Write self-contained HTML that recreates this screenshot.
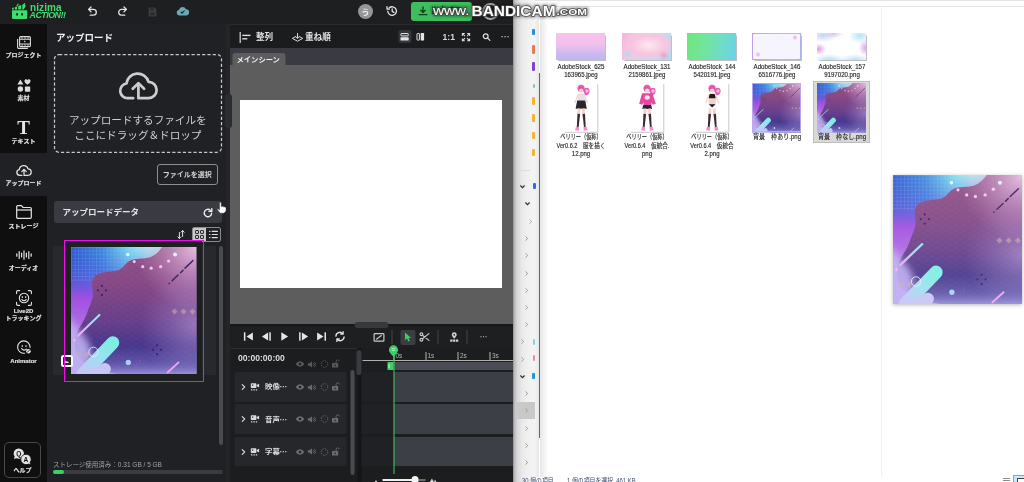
<!DOCTYPE html>
<html lang="ja">
<head>
<meta charset="utf-8">
<title>nizima ACTION!!</title>
<style>
*{box-sizing:border-box;margin:0;padding:0}
html,body{width:1024px;height:482px;overflow:hidden;background:#fff}
body{position:relative;font-family:"Liberation Sans","Noto Sans CJK JP",sans-serif;color:#ddd}
.abs,.abs *{position:absolute}
.abs{position:absolute}
svg{display:block;overflow:visible}
/* ---------- app ---------- */
#app{left:0;top:0;width:513px;height:482px;background:#1c1d1f;overflow:hidden}
#hdr{left:0;top:0;width:513px;height:24px;background:#1e1f21}
#side{left:0;top:24px;width:47px;height:458px;background:#0f0f10}
#panel{left:47px;top:24px;width:179px;height:458px;background:#202124}
#gut{z-index:3;left:226px;top:24px;width:3.500px;height:458px;background:#242528}
#tool{left:229.500px;top:25px;width:283.500px;height:23px;background:#1b1c1e}
#tabs{left:229.500px;top:48px;width:283.500px;height:17px;background:#3a3a43}
#stage{left:229.500px;top:65px;width:283.500px;height:259px;background:#5d5d5d}
#canvas{left:240px;top:100px;width:262px;height:188px;background:#fff}
#tl{left:229.500px;top:324px;width:283.500px;height:158px;background:#1c1d1f}
.sl{margin-top:-.8px;-webkit-text-stroke:.15px #e4e4e4;font-weight:bold;font-size:6px;line-height:8px;color:#e4e4e4;text-align:center;width:47px;left:0;white-space:nowrap}
.t{white-space:nowrap;line-height:1}
/* ---------- explorer ---------- */
#exp{left:513px;top:0;width:511px;height:482px;background:#fff;overflow:hidden}
.fl{-webkit-text-stroke:.15px #262626;font-size:7px;line-height:8px;color:#262626;text-align:center;width:80px;white-space:nowrap;font-family:"Liberation Sans","Noto Sans CJK JP",sans-serif}
#tool>*,#tabs>*,#tl>*{transform:translateX(.5px)}
#wrap{position:absolute;left:-20px;top:-20px;width:1064px;height:522px;padding:0;background:linear-gradient(90deg,#141516 0,#141516 533px,#fff 533px);filter:blur(.45px)}
#wrap>*{transform:translate(20px,20px)}
</style>
</head>
<body>
<svg width="0" height="0" style="position:absolute"><defs>
<linearGradient id="g-base" x1="0" y1="0" x2="1" y2="0"><stop offset="0" stop-color="#2f57d2"/><stop offset=".25" stop-color="#3c8ae0"/><stop offset=".46" stop-color="#7ddcf0"/><stop offset=".62" stop-color="#b4f2f6"/><stop offset="1" stop-color="#b4f2f6"/></linearGradient>
<linearGradient id="g-left" x1="0" y1="0" x2="0" y2="1"><stop offset="0" stop-color="#3a5fd6" stop-opacity="0"/><stop offset=".22" stop-color="#5a58d8" stop-opacity=".6"/><stop offset=".4" stop-color="#a04fe0"/><stop offset=".62" stop-color="#b070e6"/><stop offset=".82" stop-color="#aea2ee"/><stop offset="1" stop-color="#b9b0f2"/></linearGradient>
<linearGradient id="g-blob" x1="0" y1="0" x2="0" y2="1"><stop offset="0" stop-color="#935384"/><stop offset=".35" stop-color="#824685"/><stop offset=".58" stop-color="#673f8b"/><stop offset=".78" stop-color="#46368c"/><stop offset="1" stop-color="#4a3f9a"/></linearGradient>
<linearGradient id="g-fade" x1="0" y1="0" x2="0" y2="1"><stop offset="0" stop-color="#b4acf0" stop-opacity="0"/><stop offset=".5" stop-color="#a99fe8" stop-opacity=".25"/><stop offset=".8" stop-color="#b4acf0" stop-opacity=".85"/><stop offset="1" stop-color="#c4bcf6" stop-opacity="1"/></linearGradient>
<radialGradient id="g-hl" cx="1" cy="0" r=".5"><stop offset="0" stop-color="#e9c3e6" stop-opacity=".95"/><stop offset="1" stop-color="#c98fc4" stop-opacity="0"/></radialGradient>
<radialGradient id="g-hr" cx="1" cy=".62" r=".45"><stop offset="0" stop-color="#cbb0e8" stop-opacity=".5"/><stop offset="1" stop-color="#b090d8" stop-opacity="0"/></radialGradient>
<linearGradient id="g-bar" x1="1" y1="0" x2="0" y2="1"><stop offset="0" stop-color="#7eeee4"/><stop offset=".5" stop-color="#9fe0f0"/><stop offset="1" stop-color="#c9c4f6"/></linearGradient>
<linearGradient id="g-pl" x1="0" y1="1" x2="1" y2="0"><stop offset="0" stop-color="#f5a6ee"/><stop offset="1" stop-color="#8fe8f0"/></linearGradient>
<pattern id="p-grid" width="3.600" height="3.600" patternUnits="userSpaceOnUse"><path d="M3.600 0H0V3.600" fill="none" stroke="#a8d8ff" stroke-opacity=".6" stroke-width=".45"/></pattern>
<pattern id="p-dash" width="9" height="5.600" patternUnits="userSpaceOnUse"><path d="M1 1.400q1.500-.9 3 0" fill="none" stroke="#d8a8e0" stroke-opacity=".13" stroke-width=".5"/><path d="M5.500 4.200q1.500-.9 3 0" fill="none" stroke="#d8a8e0" stroke-opacity=".13" stroke-width=".5"/></pattern>
<filter id="f-b3" x="-20%" y="-20%" width="140%" height="140%"><feGaussianBlur stdDeviation="3.500"/></filter>
<filter id="f-b1" x="-20%" y="-20%" width="140%" height="140%"><feGaussianBlur stdDeviation="1.200"/></filter>
<filter id="f-wm" x="-10%" y="-50%" width="120%" height="200%"><feGaussianBlur stdDeviation=".9"/></filter>
<clipPath id="c-img"><rect width="126" height="126"/></clipPath>
<symbol id="bgimg" viewBox="0 0 126 126" preserveAspectRatio="none">
 <g clip-path="url(#c-img)">
  <rect width="126" height="126" fill="url(#g-base)"/>
  <rect width="126" height="126" fill="url(#g-left)"/>
  <rect width="70" height="34" fill="url(#p-grid)"/>
  <!-- blob -->
  <path id="blobp" d="M93 -2C88 5 84 9.500 76 11 69 12.300 62 11 57 15 53 18.500 52 21.500 47 23 40 25 31 24 25 28 20 32 21 38 22 45 22.500 52 19 57 17 63 15 69 13 73 9 79 4 86 2 96 6 106 10 118 40 128 70 128H128V-2z" fill="url(#g-blob)"/>
  <path d="M93 -2C88 5 84 9.500 76 11 69 12.300 62 11 57 15 53 18.500 52 21.500 47 23 40 25 31 24 25 28 20 32 21 38 22 45 22.500 52 19 57 17 63 15 69 13 73 9 79 4 86 2 96 6 106 10 118 40 128 70 128H128V-2z" fill="url(#p-dash)"/>
  <rect width="126" height="126" fill="url(#g-hl)"/>
  <rect width="126" height="126" fill="url(#g-hr)"/>
  <!-- bottom haze -->
  <rect x="-10" y="98" width="150" height="38" fill="url(#g-fade)" filter="url(#f-b3)"/>
  <path d="M-6 66C2 76 10 84 16 92 24 104 20 120 10 132H-6z" fill="#bfaef2" opacity=".9" filter="url(#f-b3)"/>
  <!-- dots -->
  <g fill="#f3c4f0"><circle cx="63.500" cy="14.500" r="1.500"/><circle cx="72" cy="19.500" r="1.600"/><circle cx="80.500" cy="21" r="1.600"/><circle cx="90" cy="19.500" r="1.600"/><circle cx="98" cy="14" r="1.700"/></g>
  <circle cx="57" cy="7.500" r="1.700" fill="#eafcff"/><circle cx="104.500" cy="7.500" r="2" fill="#d9f3fb"/>
  <!-- dark dashed line -->
  <g stroke="#3d2468" stroke-width="1.500" stroke-linecap="round"><path d="M98.500 36.300l.2-.2M101.500 33.500l6-5.700M110 25.500l2.500-2.400M114.500 21l8-7.600"/></g>
  <!-- dark diamond dots -->
  <g fill="#3f1f66"><circle cx="31" cy="38.500" r="1.100"/><circle cx="27" cy="43" r="1.100"/><circle cx="35" cy="43" r="1.100"/><circle cx="31" cy="47.500" r="1.100"/>
   <circle cx="86.500" cy="97.500" r="1.100"/><circle cx="82.500" cy="102" r="1.100"/><circle cx="90.500" cy="102" r="1.100"/><circle cx="86.500" cy="106.500" r="1.100"/></g>
  <!-- tan diamonds -->
  <g fill="#cdb0a8" opacity=".55"><path d="M104 61l3 3-3 3-3-3zM113 61l3 3-3 3-3-3zM122 61l3 3-3 3-3-3zM8 104l3 3-3 3-3-3zM16 104l3 3-3 3-3-3z"/></g>
  <!-- pink/cyan diagonal line -->
  <path d="M7 88 28.500 67.500" stroke="url(#g-pl)" stroke-width="2.200" stroke-linecap="round"/>
  <circle cx="3.500" cy="92.500" r="1.300" fill="#f3b6f0"/>
  <!-- big cyan bars -->
  <path d="M12 126 42 95" stroke="url(#g-bar)" stroke-width="13" stroke-linecap="round"/>
  <path d="M18 130 34 121" stroke="#c6c6f6" stroke-width="12" stroke-linecap="round"/>
  <circle cx="22.500" cy="104" r="4.600" fill="none" stroke="#f4f0ff" stroke-width=".8"/>
  <!-- cyan dot, pink line -->
  <circle cx="57.500" cy="114.500" r="2.600" fill="#8fdcf0"/><circle cx="58.300" cy="115.200" r="1.300" fill="#e9b0f0"/>
  <path d="M97 124.500 108 114.500" stroke="#f0a8ee" stroke-width="1.800" stroke-linecap="round"/>
  <circle cx="66" cy="116" r=".8" fill="#7a60b0"/><circle cx="69" cy="113" r=".8" fill="#7a60b0"/>
 </g>
</symbol>
</defs></svg>
<div id="wrap">
<div id="app" class="abs">
  <div id="hdr">
    <!-- logo -->
    <svg style="left:11px;top:3px" width="17" height="17" viewBox="0 0 17 17"><g fill="#3fdc6e">
      <path d="M1 7.2h15.2v7.6a1.2 1.2 0 0 1-1.2 1.2H2.2A1.2 1.2 0 0 1 1 14.8z"/>
      <path d="M1 6.6V5.1l1.8-.6v2.1zM3.8 6.6V4.2l2.3-.8v3.2zM7.2 6.6V3l3-1v4.6zM11.3 6.6V1.7L13.8.9l.9 2.4-2 3.3z"/>
      <path d="M5.2 3.2 6.9.6l.9.5-1.3 2.2zM11.6 2.2 13.6 0l.8.7-1.7 2z"/>
      </g>
      <rect x="5.2" y="10" width="1.8" height="2.6" rx=".4" fill="#1e1f21"/><rect x="10.2" y="10" width="1.8" height="2.6" rx=".4" fill="#1e1f21"/>
    </svg>
    <div class="t" style="left:30px;top:2.6px;font-size:10px;font-weight:bold;color:#3fdc6e;letter-spacing:.1px">nizima</div>
    <div class="t" style="left:29.5px;top:11.2px;font-size:8.9px;font-weight:bold;font-style:italic;color:#3fdc6e;letter-spacing:-.5px">ACTION!!</div>
    <!-- undo / redo -->
    <svg style="left:87px;top:6px" width="11" height="11" viewBox="0 0 11 11" fill="none" stroke="#e2e2e2" stroke-width="1.3" stroke-linecap="round" stroke-linejoin="round"><path d="M4 1 1.6 3.4 4 5.8"/><path d="M1.8 3.4h4.6a2.9 2.9 0 0 1 0 5.8H3.2"/></svg>
    <svg style="left:117px;top:6px" width="11" height="11" viewBox="0 0 11 11" fill="none" stroke="#e2e2e2" stroke-width="1.3" stroke-linecap="round" stroke-linejoin="round"><path d="M7 1l2.4 2.4L7 5.8"/><path d="M9.2 3.4H4.6a2.9 2.9 0 0 0 0 5.8h3.2"/></svg>
    <!-- save (disabled) -->
    <svg style="left:148px;top:7px" width="9" height="10" viewBox="0 0 9 10"><path d="M.6 1.2A.8.8 0 0 1 1.4.4h5l2 2v6.4a.8.8 0 0 1-.8.8H1.400a.8.800 0 0 1-.8-.8z" fill="#3d3e42"/><rect x="2" y="1.200" width="4" height="2.200" fill="#2b2c2f"/><rect x="2.200" y="5.400" width="4.600" height="3" fill="#2b2c2f"/></svg>
    <!-- cloud -->
    <svg style="left:176px;top:6px" width="13" height="10" viewBox="0 0 13 10"><path d="M3.300 9.600A3 3 0 0 1 3 3.700 3.700 3.700 0 0 1 10 3.300a3.100 3.100 0 0 1-.2 6.300z" fill="#6aa9b8"/><path d="M4.700 5.800l1.400 1.400 2.500-2.700" fill="none" stroke="#1e1f21" stroke-width="1.100"/></svg>
    <!-- avatar -->
    <div style="left:358px;top:4px;width:15px;height:15px;border-radius:50%;background:#969696"></div>
    <div class="t" style="left:358px;top:7.500px;width:15px;text-align:center;font-size:8.500px;font-weight:bold;color:#f4f4f4">う</div>
    <!-- history -->
    <svg style="left:386px;top:5px" width="12" height="12" viewBox="0 0 12 12" fill="none" stroke="#e2e2e2" stroke-width="1.300" stroke-linecap="round" stroke-linejoin="round"><path d="M1.800 6.200a4.300 4.300 0 1 0 1.300-3.200"/><path d="M1 1.700v2.400h2.400" /><path d="M6.200 3.800v2.600l1.700 1"/></svg>
    <div style="left:482.300px;top:3.200px;width:17px;height:17px;border-radius:50%;border:2px solid #b4b4b4"></div>
    <!-- export button -->
    <div style="left:411px;top:2px;width:61px;height:19px;border-radius:3px;background:#3dbd5d"></div>
    <svg style="left:418px;top:6px" width="10" height="10" viewBox="0 0 10 10" fill="none" stroke="#14401f" stroke-width="1.400" stroke-linecap="round" stroke-linejoin="round"><path d="M5 1v5M2.800 4.200 5 6.400l2.200-2.200M1 8.600h8"/></svg>
    <div class="t" style="left:431px;top:7px;font-size:8px;font-weight:bold;color:#14401f">出力する</div>
  </div>
  <div id="side">
    <!-- active bg -->
    <div style="left:0;top:129px;width:47px;height:43px;background:#202124"></div>
    <!-- project (top offsets are relative to side: y-24) -->
    <svg style="left:17px;top:12px" width="14" height="13" viewBox="0 0 14 13" fill="none" stroke="#dcdcdc" stroke-width="1.100"><rect x="2.600" y=".6" width="10.800" height="10" rx="1.200"/><path d="M.6 3v8.200a1.200 1.200 0 0 0 1.200 1.200h9" /><path d="M2.600 3.200h10.800M2.600 8h10.800" /><path d="M5 .8v2.200M8 .8v2.200M11 .8v2.200M5 8.200v2.200M8 8.200v2.200M11 8.200v2.200" stroke-width=".8"/><path d="M7.200 4.600v2l1.700-1z" fill="#dcdcdc" stroke="none"/></svg>
    <div class="sl" style="top:28px">プロジェクト</div>
    <!-- material -->
    <svg style="left:17px;top:55px" width="14" height="13" viewBox="0 0 14 13" fill="#dcdcdc"><path d="M3.400.6 6.400 5.600H.4z"/><path d="M10.500 5.800C8.600 4.400 7.500 3.400 7.500 2.200A1.500 1.500 0 0 1 10.500 1.500 1.500 1.500 0 0 1 13.500 2.200C13.500 3.400 12.400 4.400 10.500 5.800z"/><circle cx="3.400" cy="10" r="2.700"/><rect x="7.900" y="7.400" width="5.300" height="5.300" rx=".6"/></svg>
    <div class="sl" style="top:70.500px">素材</div>
    <!-- text -->
    <div class="t" style="left:0;top:94px;width:47px;text-align:center;font-family:'Liberation Serif',serif;font-weight:bold;font-size:19px;color:#e4e4e4">T</div>
    <div class="sl" style="top:113.500px">テキスト</div>
    <!-- upload -->
    <svg style="left:15.800px;top:141px" width="16.500" height="11" viewBox="0 0 42 28" fill="none" stroke="#e4e4e4" stroke-width="3.300" stroke-linecap="round" stroke-linejoin="round"><path d="M15.200 26.200H9.600A7.400 7.400 0 0 1 8.400 11.500 11.300 11.300 0 0 1 30.500 9.800 8.200 8.200 0 0 1 30.400 26.200H20.400V11.800"/><path d="M14.700 16.800 20.400 11.100l5.700 5.700"/></svg>
    <div class="sl" style="top:155.500px">アップロード</div>
    <!-- storage -->
    <svg style="left:16px;top:181px" width="16" height="14" viewBox="0 0 16 14" fill="none" stroke="#e4e4e4" stroke-width="1.200" stroke-linejoin="round"><path d="M.7 1.800A1.100 1.100 0 0 1 1.800.7h3.700l1.600 1.800h7.100a1.100 1.100 0 0 1 1.100 1.100v8.600a1.100 1.100 0 0 1-1.100 1.100H1.800A1.100 1.100 0 0 1 .7 12.200z"/><path d="M.7 5h14.600"/></svg>
    <div class="sl" style="top:198.500px">ストレージ</div>
    <!-- audio -->
    <svg style="left:16px;top:226px" width="16" height="10" viewBox="0 0 16 10" fill="none" stroke="#e4e4e4" stroke-width="1.200" stroke-linecap="round"><path d="M.8 3.800v2.400M3.200 1.600v6.800M5.600 3v4M8 .8v8.400M10.400 3v4M12.800 1.600v6.800M15.200 3.800v2.400"/></svg>
    <div class="sl" style="top:240.500px">オーディオ</div>
    <!-- live2d tracking -->
    <svg style="left:16px;top:266px" width="16" height="16" viewBox="0 0 16 16" fill="none" stroke="#e4e4e4" stroke-width="1.100" stroke-linecap="round"><path d="M.6 3.600V1.700A1.100 1.100 0 0 1 1.700.6h1.900M12.400.6h1.900a1.100 1.100 0 0 1 1.100 1.100v1.900M15.400 12.400v1.900a1.100 1.100 0 0 1-1.100 1.100h-1.900M3.600 15.400H1.700A1.100 1.100 0 0 1 .6 14.300v-1.900"/><circle cx="8" cy="8" r="4.700"/><path d="M6.300 6.600v.9M9.700 6.600v.9M5.900 9.400a2.400 2.400 0 0 0 4.200 0" /></svg>
    <div class="sl" style="top:284px">Live2D</div>
    <div class="sl" style="top:291px">トラッキング</div>
    <!-- animator -->
    <svg style="left:17px;top:316px" width="15" height="15" viewBox="0 0 15 15" fill="none" stroke="#e4e4e4" stroke-width="1.100" stroke-linecap="round"><path d="M13 7.400A6.200 6.200 0 1 0 7.600 13.200"/><path d="M5.200 5.600v1M9 5.600v1M4.600 8.600a3 3 0 0 0 4.800.6"/><circle cx="11.400" cy="11.200" r="2.300" fill="#e4e4e4" stroke="none"/><path d="M10.300 12.300l2.200-2.200" stroke="#0f0f10" stroke-width=".9"/></svg>
    <div class="sl" style="top:333.500px">Animator</div>
    <!-- help -->
    <div style="left:4px;top:418px;width:37px;height:36px;border:1px solid #47484c;border-radius:5px"></div>
    <svg style="left:13px;top:424px" width="19" height="17" viewBox="0 0 19 17"><path d="M5.800.4a5.200 5.200 0 0 1 0 10.400c-.9 0-1.700-.2-2.400-.5L.8 11l.9-2.200A5.200 5.200 0 0 1 5.800.4z" fill="#e4e4e4"/><path d="M13 6.200a5.200 5.200 0 0 0 0 10.400c.9 0 1.700-.2 2.400-.5l2.600.7-.9-2.200A5.200 5.200 0 0 0 13 6.200z" fill="#e4e4e4" stroke="#0f0f10" stroke-width=".8"/></svg>
    <div class="t" style="left:16.200px;top:427px;font-size:6.500px;font-weight:bold;color:#111">Q</div>
    <div class="t" style="left:23.600px;top:432.800px;font-size:6.500px;font-weight:bold;color:#111">A</div>
    <div class="sl" style="top:442.500px;left:-1px">ヘルプ</div>
  </div>
  <div id="panel">
    <!-- coordinates relative to panel: x-47, y-24 -->
    <div class="t" style="left:9px;top:8.500px;font-size:9.500px;font-weight:bold;color:#f0f0f0">アップロード</div>
    <svg style="left:6.800px;top:30.400px" width="170" height="100" viewBox="0 0 170 100" fill="none"><rect x=".5" y=".5" width="167" height="97.800" rx="4.500" stroke="#c8c8c8" stroke-width="1.250" stroke-dasharray="3.200 2.100"/></svg>
    <svg style="left:71px;top:47.500px" width="42" height="28" viewBox="0 0 42 28" fill="none" stroke="#cdcdcd" stroke-width="2.700" stroke-linecap="round" stroke-linejoin="round"><path d="M15.200 26.200H9.600A7.400 7.400 0 0 1 8.400 11.500 11.300 11.300 0 0 1 30.500 9.800 8.200 8.200 0 0 1 30.400 26.200H20.400V11.800"/><path d="M14.700 16.800 20.400 11.100l5.700 5.700"/></svg>
    <div class="t" style="left:1.300px;top:90.500px;width:179px;text-align:center;font-size:10.600px;color:#cfcfcf">アップロードするファイルを</div>
    <div class="t" style="left:1.400px;top:106px;width:179px;text-align:center;font-size:10.600px;color:#cfcfcf">ここにドラッグ＆ドロップ</div>
    <!-- select button -->
    <div style="left:110px;top:140px;width:60.500px;height:20.500px;border:1px solid #8e8e90;border-radius:3px"></div>
    <div class="t" style="left:110px;top:146.500px;width:60.500px;text-align:center;font-size:7px;font-weight:bold;color:#d8d8d8">ファイルを選択</div>
    <!-- section header -->
    <div style="left:6.500px;top:177px;width:168.500px;height:22px;border-radius:3px;background:#3a3a43"></div>
    <div class="t" style="left:15.500px;top:184px;font-size:8.500px;font-weight:bold;color:#e6e6e6">アップロードデータ</div>
    <svg style="left:156px;top:183.500px" width="10" height="10" viewBox="0 0 10 10" fill="none" stroke="#f0f0f0" stroke-width="1.400" stroke-linecap="round" stroke-linejoin="round"><path d="M8.600 5.200A3.700 3.700 0 1 1 7.300 2.200"/><path d="M8.800.6v2.800H6" /></svg>
    <!-- sort / view toggle -->
    <svg style="left:129.500px;top:206px" width="8" height="9" viewBox="0 0 8 9" fill="none" stroke="#e0e0e0" stroke-width="1" stroke-linecap="round" stroke-linejoin="round"><path d="M2.400 8.400V2.600M.8 6.800l1.600 1.600L4 6.800M5.600.6v5.800M4 2.200 5.600.6l1.600 1.600"/></svg>
    <div style="left:144.500px;top:203px;width:29px;height:14.500px;border:1px solid #8a8a8c;border-radius:2px"></div>
    <div style="left:145.500px;top:204px;width:13.500px;height:12.500px;background:#c9c9c9;border-radius:1px 0 0 1px"></div>
    <svg style="left:148px;top:206px" width="9" height="9" viewBox="0 0 9 9" fill="none" stroke="#2a2a2d" stroke-width="1"><rect x=".5" y=".5" width="3" height="3" rx=".5"/><rect x="5.500" y=".5" width="3" height="3" rx=".5"/><rect x=".5" y="5.500" width="3" height="3" rx=".5"/><rect x="5.500" y="5.500" width="3" height="3" rx=".5"/></svg>
    <svg style="left:162px;top:206px" width="9" height="9" viewBox="0 0 9 9" fill="none" stroke="#e0e0e0" stroke-width="1.100" stroke-linecap="round"><path d="M.6 1.400h.4M.6 4.500h.4M.6 7.600h.4M3.200 1.400h5.200M3.200 4.500h5.200M3.200 7.600h5.200"/></svg>
    <!-- list row bg + thumbnail -->
    <div style="left:6px;top:222px;width:163px;height:128.500px;background:#28292c"></div>
    <div style="left:18px;top:217px;width:137px;height:139.500px;background:#1e1f21"></div>
    <svg style="left:23.500px;top:222.500px" width="125.500" height="127" viewBox="0 0 126 126" preserveAspectRatio="none"><use href="#bgimg"/></svg>
    <!-- type badge -->
    <div style="left:13.500px;top:330.500px;width:12.500px;height:12.500px;border:2.200px solid #f6f6f6;border-radius:2.500px;background:#2a2a2e"></div>
    <svg style="left:17px;top:335px" width="5" height="4" viewBox="0 0 5 4"><path d="M0 4 1.800 1.400 3 3 3.800 2.200 5 4z" fill="#eee"/></svg>
    <!-- magenta frame -->
    <div style="left:16.500px;top:215.500px;width:140px;height:142px;border:1.500px solid #f20af0"></div>
    <!-- scrollbar -->
    <div style="left:171.500px;top:222px;width:4px;height:199px;border-radius:2px;background:#4b4b52"></div>
    <!-- storage -->
    <div class="t" style="left:6px;top:437.500px;font-size:6.500px;color:#a2a2a4">ストレージ使用済み：0.31 GB / 5 GB</div>
    <div style="left:6px;top:446px;width:170px;height:4px;border-radius:2px;background:#3b3c42"></div>
    <div style="left:6px;top:446px;width:11px;height:4px;border-radius:2px;background:#3ccf63"></div>
    <!-- hand cursor -->
    <svg style="left:170px;top:178.300px;z-index:5" width="9.500" height="12" viewBox="0 0 9.500 12"><path d="M2.500 1.200a.85.85 0 0 1 1.700 0V4.600l.9-.3c.5-.2 1 0 1.200.4.500-.3 1.100-.1 1.400.4.600-.2 1.200.1 1.300.8.200 1.400.100 2.700-.400 3.700-.400.900-1.200 1.500-2.300 1.600H4.600C3.400 11.300 2.500 10.600 1.900 9.700L.4 7.700C0 7.100.6 6.500 1.200 6.900L2.500 8z" fill="#fdfdfd" stroke="#26272a" stroke-width=".4"/></svg>
  </div>
  <div id="gut"><div style="left:-1.500px;top:70px;width:7px;height:34px;border-radius:3px;background:#2b2c30"></div></div>
  <div style="left:230px;top:24px;width:283px;height:1px;background:#2a2b2e"></div>
  <div id="tool">
    <!-- relative: x-230, y-25 -->
    <svg style="left:9.500px;top:7px" width="12" height="11" viewBox="0 0 12 11" fill="none" stroke="#dedede" stroke-linecap="butt"><path d="M.7 0v11" stroke-width="1.200"/><path d="M2.800 3.400h8.200" stroke-width="1.400"/><path d="M2.800 6.800h5" stroke-width="1.400"/></svg>
    <div class="t" style="left:26px;top:7.500px;font-size:8.600px;font-weight:bold;color:#e2e2e2">整列</div>
    <svg style="left:61px;top:7.500px" width="12" height="9" viewBox="0 0 12 9" fill="none" stroke="#dedede" stroke-width="1" stroke-linejoin="round" stroke-linecap="round"><path d="M4.200 3.600.8 5.400 6 8.200l5.200-2.800-3.400-1.800"/><path d="M6 .5v4.700M4.600 3.900 6 5.300l1.400-1.400"/></svg>
    <div class="t" style="left:75px;top:7.500px;font-size:8.600px;font-weight:bold;color:#e2e2e2">重ね順</div>
    <!-- layout toggles -->
    <div style="left:168.500px;top:5px;width:12.500px;height:12.500px;border-radius:2px;background:#34353b"></div>
    <svg style="left:170.800px;top:7.600px" width="8.200" height="7.600" viewBox="0 0 8.200 7.600"><rect x=".5" y=".5" width="7.200" height="2.400" rx=".5" fill="none" stroke="#e4e4e4" stroke-width="1"/><rect x="0" y="4.200" width="8.200" height="3.400" rx=".6" fill="#e4e4e4"/></svg>
    <svg style="left:186.500px;top:7.600px" width="7.600" height="7.600" viewBox="0 0 7.600 7.600"><rect x=".5" y=".5" width="2.400" height="6.600" rx=".5" fill="none" stroke="#e4e4e4" stroke-width="1"/><rect x="4.200" y="0" width="3.400" height="7.600" rx=".6" fill="#e4e4e4"/></svg>
    <div class="t" style="left:212.500px;top:8px;font-size:8.600px;font-weight:bold;color:#d8d8d8">1:1</div>
    <svg style="left:231px;top:7.600px" width="9" height="8.400" viewBox="0 0 9 9" fill="none" stroke="#dedede" stroke-width="1.100"><path d="M.6 3.200V.6H3.200M.8.800 3.400 3.400M5.800.6H8.400V3.200M8.200.8 5.600 3.400M8.400 5.800V8.400H5.800M8.200 8.200 5.600 5.600M3.200 8.400H.6V5.800M.8 8.200 3.400 5.600"/></svg>
    <svg style="left:252.500px;top:8px" width="8" height="8" viewBox="0 0 9 9" fill="none" stroke="#dedede" stroke-width="1.400" stroke-linecap="round"><circle cx="3.600" cy="3.600" r="2.700"/><path d="M5.800 5.800 8.300 8.300"/></svg>
    <div class="t" style="left:271px;top:8px;font-size:8px;font-weight:bold;color:#c8c8c8;letter-spacing:.3px">···</div>
  </div>
  <div id="tabs">
    <div style="left:2px;top:5px;width:53px;height:12px;border-radius:3px 3px 0 0;background:#5d5d5d"></div>
    <div class="t" style="left:6.500px;top:8px;font-size:7.300px;font-weight:bold;color:#f0f0f0">メインシーン</div>
  </div>
  <div id="stage"></div>
  <div id="canvas"></div>
  <div id="tl">
    <!-- relative: x-230, y-324 -->
    <div style="left:0;top:0;width:283px;height:2px;background:#151617"></div>
    <div style="left:0;top:2px;width:283px;height:22px;background:#1e1f21"></div>
    <div style="left:0;top:23.500px;width:127px;height:1px;background:#2d2e32"></div>
    <!-- playback icons (centers 247.8 266.3 284.5 302.8 321 339.5 ; y 336.5) -->
    <svg style="left:13px;top:8px" width="10" height="9" viewBox="0 0 10 9" fill="#e6e6e6"><rect x=".4" y=".3" width="1.500" height="8.400"/><path d="M9.400.4v8.200L3 4.500z"/></svg>
    <svg style="left:31.500px;top:8px" width="10" height="9" viewBox="0 0 10 9" fill="#e6e6e6"><path d="M6.600.4v8.200L.4 4.500z"/><rect x="7.800" y=".3" width="1.500" height="8.400"/></svg>
    <svg style="left:50.500px;top:8px" width="8" height="9" viewBox="0 0 8 9" fill="#e6e6e6"><path d="M.8.200v8.600L7.600 4.500z"/></svg>
    <svg style="left:68px;top:8px" width="10" height="9" viewBox="0 0 10 9" fill="#e6e6e6"><rect x=".6" y=".3" width="1.500" height="8.400"/><path d="M3.400.4v8.200l6.200-4.100z"/></svg>
    <svg style="left:86px;top:8px" width="10" height="9" viewBox="0 0 10 9" fill="#e6e6e6"><path d="M.6.400v8.200L7 4.500z"/><rect x="8" y=".3" width="1.500" height="8.400"/></svg>
    <svg style="left:104px;top:7px" width="11" height="11" viewBox="0 0 11 11" fill="none" stroke="#e6e6e6" stroke-width="1.300" stroke-linecap="round" stroke-linejoin="round"><path d="M1.400 5.200A3.900 3.900 0 0 1 8.200 2.600"/><path d="M8.600.6v2.400H6.200"/><path d="M9.600 5.800A3.900 3.900 0 0 1 2.800 8.400"/><path d="M2.400 10.400V8h2.400"/></svg>
    <!-- horizontal + vertical handles -->
    <div style="left:124px;top:-2.500px;width:34px;height:6px;border-radius:3px;background:#38393d;z-index:2"></div>
    <div style="left:127px;top:24px;width:4.500px;height:134px;background:#141516"></div>
    <div style="left:126.500px;top:26px;width:5px;height:25px;border-radius:2.500px;background:#3a3a40"></div>
    <!-- timeline tools -->
    <svg style="left:143px;top:8.500px" width="11" height="9" viewBox="0 0 11 9" fill="none" stroke="#c8c8c8" stroke-width="1.200" stroke-linejoin="round"><rect x=".6" y=".6" width="9.800" height="7.600" rx=".8"/><path d="M2.600 6.400 8.200 2.200"/></svg>
    <div style="left:161px;top:6px;width:1px;height:14px;background:#44454a"></div>
    <div style="left:170px;top:5.500px;width:15.500px;height:15px;border-radius:2px;background:#3c3d43"></div>
    <svg style="left:174.500px;top:8px" width="7" height="10" viewBox="0 0 7 10"><path d="M.5.400v7.800l2-1.700L4 9.600l1.400-.6L4 5.900h2.600z" fill="#3ccf63"/></svg>
    <svg style="left:189.500px;top:8px" width="10" height="10" viewBox="0 0 10 10" fill="none" stroke="#c8c8c8" stroke-width="1.200" stroke-linecap="round"><circle cx="1.900" cy="2.300" r="1.400"/><circle cx="1.900" cy="7.700" r="1.400"/><path d="M3 3.200 9.400 8.400M3 6.800 9.400 1.600"/></svg>
    <div style="left:207px;top:6px;width:1px;height:14px;background:#44454a"></div>
    <svg style="left:219.500px;top:7.500px" width="9.500" height="10.500" viewBox="0 0 10 12"><path d="M5 .4a2.800 2.800 0 0 1 2.800 2.800C7.800 5.200 5 7.600 5 7.600S2.200 5.200 2.200 3.200A2.800 2.800 0 0 1 5 .4z" fill="#d0d0d0"/><circle cx="5" cy="3.200" r="1" fill="#1e1f21"/><path d="M.4 8.600h2.600v2.600H.4zM3.700 8.600h2.600v2.600H3.700zM7 8.600h2.600v2.600H7z" fill="#d0d0d0"/></svg>
    <div style="left:236px;top:6px;width:1px;height:14px;background:#44454a"></div>
    <div class="t" style="left:250px;top:8.500px;font-size:7px;font-weight:bold;color:#a8a8a8;letter-spacing:.2px">···</div>
    <!-- track rows -->
    <div style="left:4px;top:47.500px;width:112px;height:30px;background:#26272a;border-radius:1px"></div>
    <div style="left:4px;top:80px;width:112px;height:29.500px;background:#26272a;border-radius:1px"></div>
    <div style="left:4px;top:112.500px;width:112px;height:29.500px;background:#26272a;border-radius:1px"></div>
    <!-- timecode + header icons -->
    <div class="t" style="left:8px;top:30px;font-size:8.600px;font-weight:bold;color:#dcdcdc">00:00:00:00</div>
    <svg style="left:65.500px;top:37px" width="9" height="6" viewBox="0 0 9 6"><path d="M.3 3C1.500 1.100 2.900.3 4.500.3S7.500 1.100 8.700 3C7.500 4.900 6.100 5.700 4.500 5.700S1.500 4.900.3 3z" fill="#58595e"/><circle cx="4.500" cy="3" r="1.200" fill="#1e1f21"/></svg>
    <svg style="left:77.500px;top:36.5px" width="9" height="7" viewBox="0 0 9 7"><path d="M.4 2.300h1.800L4.600.3v6.400L2.200 4.700H.4z" fill="#58595e"/><path d="M5.800 2a2 2 0 0 1 0 3M6.900 .9a3.600 3.600 0 0 1 0 5.200" fill="none" stroke="#58595e" stroke-width=".8"/></svg>
    <svg style="left:90px;top:36px" width="8" height="8" viewBox="0 0 8 8"><circle cx="4" cy="4" r="3.300" fill="none" stroke="#58595e" stroke-width="1" stroke-dasharray="1.300 1.300"/></svg>
    <svg style="left:101.500px;top:35px" width="8" height="9" viewBox="0 0 8 9"><rect x=".5" y="4" width="6.200" height="4.600" rx=".6" fill="#58595e"/><path d="M4.600 4V2.400a1.500 1.500 0 0 1 3 0" fill="none" stroke="#58595e" stroke-width=".9"/><rect x="3" y="5.600" width="1.200" height="1.600" fill="#1e1f21"/></svg>
    <svg style="left:65.500px;top:60px" width="9" height="6" viewBox="0 0 9 6"><path d="M.3 3C1.500 1.100 2.900.3 4.500.3S7.500 1.100 8.700 3C7.500 4.900 6.100 5.700 4.500 5.700S1.500 4.900.3 3z" fill="#6a6b70"/><circle cx="4.500" cy="3" r="1.200" fill="#1e1f21"/></svg>
    <svg style="left:77.500px;top:59.5px" width="9" height="7" viewBox="0 0 9 7"><path d="M.4 2.300h1.800L4.600.3v6.400L2.200 4.700H.4z" fill="#6a6b70"/><path d="M5.800 2a2 2 0 0 1 0 3M6.900 .9a3.600 3.600 0 0 1 0 5.200" fill="none" stroke="#6a6b70" stroke-width=".8"/></svg>
    <svg style="left:90px;top:59px" width="8" height="8" viewBox="0 0 8 8"><circle cx="4" cy="4" r="3.300" fill="none" stroke="#6a6b70" stroke-width="1" stroke-dasharray="1.300 1.300"/></svg>
    <svg style="left:101.500px;top:58px" width="8" height="9" viewBox="0 0 8 9"><rect x=".5" y="4" width="6.200" height="4.600" rx=".6" fill="#6a6b70"/><path d="M4.600 4V2.400a1.500 1.500 0 0 1 3 0" fill="none" stroke="#6a6b70" stroke-width=".9"/><rect x="3" y="5.600" width="1.200" height="1.600" fill="#1e1f21"/></svg>
    <svg style="left:11.500px;top:60px" width="4" height="6" viewBox="0 0 4 6" fill="none" stroke="#dcdcdc" stroke-width="1.100" stroke-linecap="round" stroke-linejoin="round"><path d="M.7.600 3.200 3 .7 5.400"/></svg><svg style="left:20.500px;top:59px" width="9" height="8" viewBox="0 0 9 8"><rect x=".3" y=".3" width="5.600" height="4.600" rx=".7" fill="#dcdcdc"/><path d="M6.300 2 8.600.7v3.800L6.300 3.300z" fill="#dcdcdc"/><rect x="1.400" y="1.500" width="1.400" height="1.200" fill="#26272a"/><path d="M.5 6.900h1.400M2.900 6.900h1.400M5.300 6.900h1.400" stroke="#dcdcdc" stroke-width="1.200"/></svg>
    <svg style="left:65.500px;top:92.3px" width="9" height="6" viewBox="0 0 9 6"><path d="M.3 3C1.500 1.100 2.900.3 4.500.3S7.500 1.100 8.700 3C7.500 4.900 6.100 5.700 4.500 5.700S1.500 4.900.3 3z" fill="#6a6b70"/><circle cx="4.500" cy="3" r="1.200" fill="#1e1f21"/></svg>
    <svg style="left:77.500px;top:91.8px" width="9" height="7" viewBox="0 0 9 7"><path d="M.4 2.300h1.800L4.600.3v6.400L2.200 4.700H.4z" fill="#6a6b70"/><path d="M5.800 2a2 2 0 0 1 0 3M6.900 .9a3.600 3.600 0 0 1 0 5.200" fill="none" stroke="#6a6b70" stroke-width=".8"/></svg>
    <svg style="left:90px;top:91.3px" width="8" height="8" viewBox="0 0 8 8"><circle cx="4" cy="4" r="3.300" fill="none" stroke="#6a6b70" stroke-width="1" stroke-dasharray="1.300 1.300"/></svg>
    <svg style="left:101.500px;top:90.3px" width="8" height="9" viewBox="0 0 8 9"><rect x=".5" y="4" width="6.200" height="4.600" rx=".6" fill="#6a6b70"/><path d="M4.600 4V2.400a1.500 1.500 0 0 1 3 0" fill="none" stroke="#6a6b70" stroke-width=".9"/><rect x="3" y="5.600" width="1.200" height="1.600" fill="#1e1f21"/></svg>
    <svg style="left:11.500px;top:92.3px" width="4" height="6" viewBox="0 0 4 6" fill="none" stroke="#dcdcdc" stroke-width="1.100" stroke-linecap="round" stroke-linejoin="round"><path d="M.7.600 3.200 3 .7 5.400"/></svg><svg style="left:20.500px;top:91.3px" width="9" height="8" viewBox="0 0 9 8"><rect x=".3" y=".3" width="5.600" height="4.600" rx=".7" fill="#dcdcdc"/><path d="M6.300 2 8.600.7v3.800L6.300 3.300z" fill="#dcdcdc"/><rect x="1.400" y="1.500" width="1.400" height="1.200" fill="#26272a"/><path d="M.5 6.900h1.400M2.900 6.900h1.400M5.300 6.900h1.400" stroke="#dcdcdc" stroke-width="1.200"/></svg>
    <svg style="left:65.500px;top:124.5px" width="9" height="6" viewBox="0 0 9 6"><path d="M.3 3C1.500 1.100 2.900.3 4.500.3S7.500 1.100 8.700 3C7.500 4.900 6.100 5.700 4.500 5.700S1.500 4.900.3 3z" fill="#6a6b70"/><circle cx="4.500" cy="3" r="1.200" fill="#1e1f21"/></svg>
    <svg style="left:77.500px;top:124.0px" width="9" height="7" viewBox="0 0 9 7"><path d="M.4 2.300h1.800L4.600.3v6.400L2.200 4.700H.4z" fill="#6a6b70"/><path d="M5.800 2a2 2 0 0 1 0 3M6.900 .9a3.600 3.600 0 0 1 0 5.200" fill="none" stroke="#6a6b70" stroke-width=".8"/></svg>
    <svg style="left:90px;top:123.5px" width="8" height="8" viewBox="0 0 8 8"><circle cx="4" cy="4" r="3.300" fill="none" stroke="#6a6b70" stroke-width="1" stroke-dasharray="1.300 1.300"/></svg>
    <svg style="left:101.500px;top:122.5px" width="8" height="9" viewBox="0 0 8 9"><rect x=".5" y="4" width="6.200" height="4.600" rx=".6" fill="#6a6b70"/><path d="M4.600 4V2.400a1.500 1.500 0 0 1 3 0" fill="none" stroke="#6a6b70" stroke-width=".9"/><rect x="3" y="5.600" width="1.200" height="1.600" fill="#1e1f21"/></svg>
    <svg style="left:11.500px;top:124.5px" width="4" height="6" viewBox="0 0 4 6" fill="none" stroke="#dcdcdc" stroke-width="1.100" stroke-linecap="round" stroke-linejoin="round"><path d="M.7.600 3.200 3 .7 5.400"/></svg><svg style="left:20.500px;top:123.5px" width="9" height="8" viewBox="0 0 9 8"><rect x=".3" y=".3" width="5.600" height="4.600" rx=".7" fill="#dcdcdc"/><path d="M6.300 2 8.600.7v3.800L6.300 3.300z" fill="#dcdcdc"/><rect x="1.400" y="1.500" width="1.400" height="1.200" fill="#26272a"/><path d="M.5 6.900h1.400M2.900 6.900h1.400M5.300 6.900h1.400" stroke="#dcdcdc" stroke-width="1.200"/></svg>
    <!-- track rows -->
    <div class="t" style="left:35px;top:59px;font-size:7.400px;font-weight:bold;color:#dcdcdc">映像···</div>
    <div class="t" style="left:35px;top:91.500px;font-size:7.400px;font-weight:bold;color:#dcdcdc">音声···</div>
    <div class="t" style="left:35px;top:123.500px;font-size:7.400px;font-weight:bold;color:#dcdcdc">字幕···</div>
    <!-- track scroll -->
    <div style="left:120px;top:46px;width:4px;height:105px;border-radius:2px;background:#4a4a52"></div>
    <!-- ruler -->
    <div style="left:132.500px;top:36px;width:150.500px;height:1px;background:#b0b0b0"></div>
    <div style="left:163px;top:28px;width:1px;height:8px;background:#b8b8b8"></div>
    <div style="left:195px;top:28px;width:1px;height:8px;background:#b8b8b8"></div>
    <div style="left:227.500px;top:28px;width:1px;height:8px;background:#b8b8b8"></div>
    <div style="left:259.500px;top:28px;width:1px;height:8px;background:#b8b8b8"></div>
    <div class="t" style="left:165.500px;top:28.500px;font-size:6.500px;color:#b4b4b4">0s</div>
    <div class="t" style="left:197.500px;top:28.500px;font-size:6.500px;color:#b4b4b4">1s</div>
    <div class="t" style="left:230px;top:28.500px;font-size:6.500px;color:#b4b4b4">2s</div>
    <div class="t" style="left:262px;top:28.500px;font-size:6.500px;color:#b4b4b4">3s</div>
    <!-- scene strip + tracks -->
    <div style="left:163.500px;top:37.500px;width:119.500px;height:8.500px;background:#4b4b55"></div>
    <div style="left:157px;top:38px;width:6.500px;height:7.500px;background:#3ccf63"></div>
    <div style="left:158.500px;top:40px;width:1px;height:3.500px;background:#c8f4d4"></div>
    <div style="left:163.500px;top:47.500px;width:119.500px;height:30px;background:#3d3f46"></div>
    <div style="left:163.500px;top:80px;width:119.500px;height:29.500px;background:#3d3f46"></div>
    <div style="left:163.500px;top:112.500px;width:119.500px;height:29.500px;background:#3d3f46"></div>
    <div style="left:131.500px;top:47.500px;width:32px;height:30px;background:#202124"></div>
    <div style="left:131.500px;top:80px;width:32px;height:29.500px;background:#202124"></div>
    <div style="left:131.500px;top:112.500px;width:32px;height:29.500px;background:#202124"></div>
    <!-- playhead -->
    <div style="left:163px;top:30px;width:1px;height:119.500px;background:#3ccf63"></div>
    <svg style="left:158.500px;top:20.500px" width="10" height="12" viewBox="0 0 10 12"><path d="M5 .3a4.600 4.600 0 0 1 4.600 4.600C9.600 7.600 5 11.600 5 11.600S.4 7.600.4 4.900A4.600 4.600 0 0 1 5 .3z" fill="#3ccf63"/><path d="M3.200 3.600h3.600M3.200 5.400h3.600" stroke="#c8f4d4" stroke-width=".8"/></svg>
    <!-- zoom slider -->
    <div style="left:152px;top:155px;width:32.500px;height:2px;background:#f0f0f0"></div>
    <div style="left:184px;top:155px;width:11px;height:2px;background:#6a6a70"></div>
    <div style="left:181px;top:152.300px;width:7.400px;height:7.400px;border-radius:50%;background:#f4f4f4"></div>
    <svg style="left:143.800px;top:155.800px" width="5" height="4" viewBox="0 0 5 4"><path d="M2.500 0 5 4H0z" fill="#cfcfcf"/></svg>
    <svg style="left:198.400px;top:153.600px" width="9.500" height="6" viewBox="0 0 9.500 6"><path d="M3.400 .6 6.800 6H0zM6.400 1.600 9.500 6H5z" fill="#cfcfcf"/></svg>
  </div>
</div>
<div id="exp" class="abs">
  <div style="left:0;top:0;width:511px;height:5.500px;background:#fdfdfd"></div><div style="left:0;top:0;width:511px;height:.8px;background:#e4e4e4"></div>
  <div style="left:0;top:5.500px;width:511px;height:1px;background:#e2e2e2"></div>
  <div style="left:0;top:0;width:9px;height:482px;background:linear-gradient(90deg,#8a8a8a 0,#b4b4b4 5%,#d6d6d6 18%,#eaeaea 42%,#f1f1f1 70%,#f4f4f4 100%);width:21.500px"></div>
  <div style="left:25.9px;top:73px;width:1px;height:365px;background:#666"></div>
  <div style="left:26.9px;top:6.500px;width:8px;height:470px;background:linear-gradient(90deg,#e6e6e6,#fff)"></div>
  <div style="left:21.3px;top:6.500px;width:4.600px;height:470px;background:linear-gradient(90deg,#f6f6f6,#e6e6e6)"></div>
  <div style="left:368px;top:6px;width:1px;height:470px;background:#f1f1f1"></div>
  <div style="left:18.9px;top:28.7px;width:3.1px;height:6.7px;background:#2a8ad8;border-radius:1px"></div>
  <div style="left:18.9px;top:45px;width:3.1px;height:8.6px;background:#e27d55;border-radius:1px"></div>
  <div style="left:18.9px;top:62.3px;width:3.1px;height:8.7px;background:#7e43cf;border-radius:1px"></div>
  <div style="left:20px;top:83.5px;width:1.5px;height:4.5px;background:#7fc8c0;border-radius:1px"></div>
  <div style="left:18.9px;top:97px;width:3.1px;height:7.6px;background:#f2b632;border-radius:1px"></div>
  <div style="left:18.9px;top:114px;width:3.1px;height:8px;background:#f2b632;border-radius:1px"></div>
  <div style="left:18.9px;top:131.5px;width:3.1px;height:7.5px;background:#f2b632;border-radius:1px"></div>
  <div style="left:18.9px;top:148.7px;width:3.1px;height:7.3px;background:#f2b632;border-radius:1px"></div>
  <div style="left:19.5px;top:182.8px;width:3.0px;height:6.2px;background:#2f6fe0;border-radius:1px"></div>
  <div style="left:19.5px;top:338.5px;width:2.5px;height:6.0px;background:#7fd0e8;border-radius:1px"></div>
  <div style="left:19.5px;top:355px;width:2.5px;height:6px;background:#e88aa8;border-radius:1px"></div>
  <div style="left:18.6px;top:372.7px;width:3.0px;height:6.1px;background:#1a9ad0;border-radius:1px"></div>
  <div style="left:4.5px;top:170px;width:12.500px;height:1px;background:#dedede"></div>
  <div style="left:2.4px;top:402px;width:19.200px;height:16.500px;background:#c9c9c9"></div>
  <svg style="left:6.9px;top:185.3px" width="5" height="3.500" viewBox="0 0 5 3.500" fill="none" stroke="#2a2a2a" stroke-width="1.100"><path d="M.4.500 2.500 2.700 4.600.5"/></svg>
  <svg style="left:11.5px;top:201.9px" width="5" height="3.500" viewBox="0 0 5 3.500" fill="none" stroke="#2a2a2a" stroke-width="1.100"><path d="M.4.500 2.500 2.700 4.600.5"/></svg>
  <svg style="left:16.1px;top:219.1px" width="3.500" height="5" viewBox="0 0 3.500 5" fill="none" stroke="#a8a8a8" stroke-width=".9"><path d="M.5.400 2.700 2.500.5 4.600"/></svg>
  <svg style="left:11.8px;top:236.3px" width="3.500" height="5" viewBox="0 0 3.500 5" fill="none" stroke="#9c9c9c" stroke-width="1"><path d="M.5.400 2.700 2.500.5 4.600"/></svg>
  <svg style="left:11.8px;top:253.2px" width="3.500" height="5" viewBox="0 0 3.500 5" fill="none" stroke="#9c9c9c" stroke-width="1"><path d="M.5.400 2.700 2.500.5 4.600"/></svg>
  <svg style="left:11.8px;top:270.5px" width="3.500" height="5" viewBox="0 0 3.500 5" fill="none" stroke="#9c9c9c" stroke-width="1"><path d="M.5.400 2.700 2.500.5 4.600"/></svg>
  <svg style="left:11.8px;top:287.8px" width="3.500" height="5" viewBox="0 0 3.500 5" fill="none" stroke="#9c9c9c" stroke-width="1"><path d="M.5.400 2.700 2.500.5 4.600"/></svg>
  <svg style="left:11.8px;top:304.7px" width="3.500" height="5" viewBox="0 0 3.500 5" fill="none" stroke="#9c9c9c" stroke-width="1"><path d="M.5.400 2.700 2.500.5 4.600"/></svg>
  <svg style="left:11.8px;top:322.1px" width="3.500" height="5" viewBox="0 0 3.500 5" fill="none" stroke="#9c9c9c" stroke-width="1"><path d="M.5.400 2.700 2.500.5 4.600"/></svg>
  <svg style="left:8.1px;top:339.1px" width="3.500" height="5" viewBox="0 0 3.500 5" fill="none" stroke="#9c9c9c" stroke-width="1"><path d="M.5.400 2.700 2.500.5 4.600"/></svg>
  <svg style="left:8.1px;top:356.5px" width="3.500" height="5" viewBox="0 0 3.500 5" fill="none" stroke="#9c9c9c" stroke-width="1"><path d="M.5.400 2.700 2.500.5 4.600"/></svg>
  <svg style="left:7.0px;top:374.5px" width="5" height="3.500" viewBox="0 0 5 3.500" fill="none" stroke="#2a2a2a" stroke-width="1.100"><path d="M.4.500 2.500 2.700 4.600.5"/></svg>
  <svg style="left:11.8px;top:390.8px" width="3.500" height="5" viewBox="0 0 3.500 5" fill="none" stroke="#9c9c9c" stroke-width="1"><path d="M.5.400 2.700 2.500.5 4.600"/></svg>
  <svg style="left:11.8px;top:408.1px" width="3.500" height="5" viewBox="0 0 3.500 5" fill="none" stroke="#9c9c9c" stroke-width="1"><path d="M.5.400 2.700 2.500.5 4.600"/></svg>
  <svg style="left:11.8px;top:425.5px" width="3.500" height="5" viewBox="0 0 3.500 5" fill="none" stroke="#9c9c9c" stroke-width="1"><path d="M.5.400 2.700 2.500.5 4.600"/></svg>
  <svg style="left:11.8px;top:442.8px" width="3.500" height="5" viewBox="0 0 3.500 5" fill="none" stroke="#9c9c9c" stroke-width="1"><path d="M.5.400 2.700 2.500.5 4.600"/></svg>
  <svg style="left:11.8px;top:459.8px" width="3.500" height="5" viewBox="0 0 3.500 5" fill="none" stroke="#9c9c9c" stroke-width="1"><path d="M.5.400 2.700 2.500.5 4.600"/></svg>
  <div style="left:43px;top:32.500px;width:49px;height:27.500px;background:linear-gradient(180deg,#f7c3ea 0,#f3c0ec 40%,#c4b8f0 85%,#b9b9f2 100%);box-shadow:.5px .5px 1px rgba(0,0,0,.25)"></div>
  <div style="left:108.5px;top:32.500px;width:49px;height:27.500px;background:radial-gradient(ellipse at 55% 45%,#fde8f2 0,#f8c4e0 45%,rgba(248,180,215,0) 75%),linear-gradient(115deg,#f6b4d8 0,#f3c8e4 30%,#c8dcf0 60%,#a8dff0 100%);box-shadow:.5px .5px 1px rgba(0,0,0,.25)"></div>
  <div style="left:109.5px;top:50px;width:10px;height:9px;background:radial-gradient(circle,#a8e0ee,rgba(168,224,238,0) 70%)"></div>
  <div style="left:144.5px;top:51px;width:12px;height:9px;background:radial-gradient(circle,#f59cc8,rgba(245,156,200,0) 70%)"></div>
  <div style="left:173.5px;top:32.500px;width:49px;height:27.500px;background:linear-gradient(100deg,#6fe67c 0,#72e59a 35%,#6fdcc8 70%,#6cd2e6 100%);box-shadow:.5px .5px 1px rgba(0,0,0,.25)"></div>
  <div style="left:239px;top:32.500px;width:49px;height:27.500px;background:linear-gradient(90deg,#b9a2ee,#e7a8e6 50%,#a9b4f2);box-shadow:.5px .5px 1px rgba(0,0,0,.25)"></div>
  <div style="left:240.3px;top:33.800px;width:46.400px;height:24.900px;background:#f6f4fd;border-radius:1px"></div>
  <div style="left:242px;top:52px;width:6px;height:5px;background:radial-gradient(circle,#f0a0e0,rgba(240,160,224,0) 70%)"></div>
  <div style="left:279px;top:35px;width:6px;height:5px;background:radial-gradient(circle,#f0a0e0,rgba(240,160,224,0) 70%)"></div>
  <div style="left:304px;top:32.500px;width:49px;height:27.500px;background:radial-gradient(ellipse 16% 22% at 3% 60%,#e59be6 0,rgba(229,155,230,0) 100%),radial-gradient(ellipse 14% 30% at 99% 55%,#dba6f0 0,rgba(219,166,240,0) 100%),radial-gradient(ellipse 30% 26% at 12% 8%,#c3d4f8 0,rgba(195,212,248,0) 100%),radial-gradient(ellipse 22% 18% at 33% 2%,#e6bdf0 0,rgba(230,189,240,0) 100%),radial-gradient(ellipse 24% 30% at 88% 10%,#b4e6f4 0,rgba(180,230,244,0) 100%),radial-gradient(ellipse 34% 22% at 25% 100%,#b2e0f5 0,rgba(178,224,245,0) 100%),radial-gradient(ellipse 34% 22% at 78% 100%,#b6ddf6 0,rgba(182,221,246,0) 100%),#fff;box-shadow:.5px .5px 1px rgba(0,0,0,.25)"></div>
  <svg style="left:51.4px;top:82.500px" width="35" height="50" viewBox="0 0 35 50"><rect x="0" y="0" width="33.800" height="49" fill="#fff"/><path d="M33.800 1v48.300H1" fill="none" stroke="#c9c9c9" stroke-width="1"/><path d="M13.600 6.500C13 3.500 15 1.600 17 1.700 19.500 1.600 21 3.400 20.600 5.500 22.500 4 25 4.500 25.500 7 26 9.500 24.500 12 22 12.300 20.500 12.300 20 11 20.300 9.500L19.500 8.500H14.500z" fill="#e659b4"/><circle cx="23" cy="8" r="1.700" fill="#f7b9e2"/><ellipse cx="17.200" cy="7.300" rx="2.100" ry="2.500" fill="#f3d4c8"/><path d="M14.600 6.200C15 3.800 19.500 3.800 19.800 6.200 18.500 5.200 16 5.200 14.600 6.200z" fill="#d9419f"/><path d="M14.500 10.500h5.400l1.300 7.500h-8z" fill="#e4e0ea"/><path d="M13.200 17.500h8l1.600 8.300H11.600z" fill="#2a2430"/><path d="M14.400 11l-3.400 8.500M20 11l3.400 8.500" stroke="#f3d4c8" stroke-width="1.300" stroke-linecap="round"/><g transform="rotate(5 15.200 25)"><path d="M13.600 25.500h3.200l-.4 8.500h-2.200z" fill="#f3d4c8"/><path d="M14 31h2.600l-.3 13.500h-1.800z" fill="#3a2a34"/><path d="M13.600 44h3.200v3.600h-3.800z" fill="#f08ccf"/></g><g transform="rotate(-5 19.200 25)"><path d="M17.600 25.500h3.200l-.6 8.500H18z" fill="#f3d4c8"/><path d="M18 31h2.500l-.5 13.500h-1.700z" fill="#3a2a34"/><path d="M17.800 44h3.200l.6 3.600h-3.800z" fill="#f08ccf"/></g></svg>
  <svg style="left:116.8px;top:82.500px" width="35" height="50" viewBox="0 0 35 50"><rect x="0" y="0" width="33.800" height="49" fill="#fff"/><path d="M33.800 1v48.300H1" fill="none" stroke="#c9c9c9" stroke-width="1"/><path d="M13.600 6.500C13 3.500 15 1.600 17 1.700 19.500 1.600 21 3.400 20.600 5.500 22.500 4 25 4.500 25.500 7 26 9.500 24.500 12 22 12.300 20.500 12.300 20 11 20.300 9.500L19.500 8.500H14.500z" fill="#e659b4"/><circle cx="23" cy="8" r="1.700" fill="#f7b9e2"/><ellipse cx="17.200" cy="7.300" rx="2.100" ry="2.500" fill="#f3d4c8"/><path d="M14.600 6.200C15 3.800 19.500 3.800 19.800 6.200 18.500 5.200 16 5.200 14.600 6.200z" fill="#d9419f"/><path d="M12 10.300h10.400l3.400 10.500-3 1-1.300-2.600v3H13.500v-3l-1.300 2.600-3-1z" fill="#e8479f"/><ellipse cx="17.200" cy="14.500" rx="2.600" ry="2.200" fill="#f0e6f0"/><path d="M13.200 22h8l.8 4H12.400z" fill="#2a2430"/><g transform="rotate(5 15.200 25)"><path d="M13.600 25.500h3.200l-.4 8.500h-2.200z" fill="#f3d4c8"/><path d="M14 31h2.600l-.3 13.500h-1.800z" fill="#3a2a34"/><path d="M13.600 44h3.200v3.600h-3.800z" fill="#f08ccf"/></g><g transform="rotate(-5 19.200 25)"><path d="M17.600 25.500h3.200l-.6 8.500H18z" fill="#f3d4c8"/><path d="M18 31h2.500l-.5 13.500h-1.700z" fill="#3a2a34"/><path d="M17.800 44h3.200l.6 3.600h-3.800z" fill="#f08ccf"/></g></svg>
  <svg style="left:182px;top:82.500px" width="35" height="50" viewBox="0 0 35 50"><rect x="0" y="0" width="33.800" height="49" fill="#fff"/><path d="M33.800 1v48.300H1" fill="none" stroke="#c9c9c9" stroke-width="1"/><path d="M13.600 6.500C13 3.500 15 1.600 17 1.700 19.500 1.600 21 3.400 20.600 5.500 22.500 4 25 4.500 25.500 7 26 9.500 24.500 12 22 12.300 20.500 12.300 20 11 20.300 9.500L19.500 8.500H14.500z" fill="#e659b4"/><circle cx="23" cy="8" r="1.700" fill="#f7b9e2"/><ellipse cx="17.200" cy="7.300" rx="2.100" ry="2.500" fill="#f3d4c8"/><path d="M14.600 6.200C15 3.800 19.500 3.800 19.800 6.200 18.500 5.200 16 5.200 14.600 6.200z" fill="#d9419f"/><path d="M14.400 10.300h5.600l1 6.500-.6 5.700h-6.400l-.6-5.700z" fill="#f3d4c8"/><path d="M14.200 11h6l.4 4.200h-6.800z" fill="#1f1a24"/><path d="M13.900 21.200h6.600l-3.300 3.200z" fill="#1f1a24"/><path d="M14.200 11l-3.600 9M20.200 11l3.600 9" stroke="#f3d4c8" stroke-width="1.200" stroke-linecap="round"/><g transform="rotate(5 15.200 25)"><path d="M13.600 25.500h3.200l-.4 8.500h-2.200z" fill="#f3d4c8"/><path d="M14 31h2.600l-.3 13.500h-1.800z" fill="#3a2a34"/><path d="M13.600 44h3.200v3.600h-3.800z" fill="#f08ccf"/></g><g transform="rotate(-5 19.200 25)"><path d="M17.600 25.500h3.200l-.6 8.500H18z" fill="#f3d4c8"/><path d="M18 31h2.500l-.5 13.500h-1.700z" fill="#3a2a34"/><path d="M17.800 44h3.200l.6 3.600h-3.800z" fill="#f08ccf"/></g></svg>
  <div style="left:300.4px;top:80.500px;width:56.200px;height:62.200px;background:#d9d9d9;border:1px solid #bdbdbd"></div>
  <svg style="left:239px;top:82.500px" width="49" height="49.500" viewBox="0 0 126 126" preserveAspectRatio="none"><use href="#bgimg"/></svg>
  <div style="left:239px;top:82.500px;width:49px;height:49.500px;border:1px solid rgba(190,170,240,.9)"></div>
  <svg style="left:304px;top:82.500px" width="49" height="49.500" viewBox="0 0 126 126" preserveAspectRatio="none"><use href="#bgimg"/></svg>
  <div style="left:379.5px;top:174.500px;width:129px;height:129px;box-shadow:0 1px 4px rgba(0,0,0,.28);background:#fff"></div>
  <svg style="left:379.5px;top:174.500px;opacity:.93" width="129" height="129" viewBox="0 0 126 126" preserveAspectRatio="none"><use href="#bgimg"/></svg>
  <div class="t" style="left:8.8px;top:477.300px;font-size:7px;color:#3a4a6c;transform-origin:0 0;transform:scaleX(.84)">30 個の項目</div>
  <div class="t" style="left:53.5px;top:477.300px;font-size:7px;color:#3a4a6c;transform-origin:0 0;transform:scaleX(.84)">1 個の項目を選択&nbsp; 461 KB</div>
  <div style="left:490px;top:478px;width:7px;height:1px;background:#8c8c8c;box-shadow:0 2px 0 #8c8c8c"></div>
  <div style="left:500px;top:474.500px;width:12px;height:10px;background:#cce8f8;border:1px solid #5ab0e0"></div>
  <div style="left:504px;top:478px;width:8px;height:6px;border:1px solid #444;background:#fff"></div>
  <div class="fl" style="left:28.2px;top:62.8px;transform:scaleX(0.88)">AdobeStock_625</div>
  <div class="fl" style="left:28.2px;top:71.2px;transform:scaleX(0.87)">163965.jpeg</div>
  <div class="fl" style="left:93.7px;top:62.8px;transform:scaleX(0.88)">AdobeStock_131</div>
  <div class="fl" style="left:93.7px;top:71.2px;transform:scaleX(0.87)">2159861.jpeg</div>
  <div class="fl" style="left:158.7px;top:62.8px;transform:scaleX(0.88)">AdobeStock_144</div>
  <div class="fl" style="left:158.7px;top:71.2px;transform:scaleX(0.87)">5420191.jpeg</div>
  <div class="fl" style="left:224.2px;top:62.8px;transform:scaleX(0.88)">AdobeStock_146</div>
  <div class="fl" style="left:224.2px;top:71.2px;transform:scaleX(0.87)">6516776.jpeg</div>
  <div class="fl" style="left:289.2px;top:62.8px;transform:scaleX(0.88)">AdobeStock_157</div>
  <div class="fl" style="left:289.2px;top:71.2px;transform:scaleX(0.87)">9197020.png</div>
  <div class="fl" style="left:28.2px;top:133.2px;transform:scaleX(0.74)">ベリリー（仮称）</div>
  <div class="fl" style="left:28.2px;top:142px;transform:scaleX(0.8)">Ver0.6.2　服を描く</div>
  <div class="fl" style="left:28.2px;top:149.8px;transform:scaleX(0.86)">12.png</div>
  <div class="fl" style="left:93.7px;top:133.2px;transform:scaleX(0.74)">ベリリー（仮称）</div>
  <div class="fl" style="left:93.7px;top:142px;transform:scaleX(0.8)">Ver0.6.4　仮統合.</div>
  <div class="fl" style="left:93.7px;top:149.8px;transform:scaleX(0.86)">png</div>
  <div class="fl" style="left:158.7px;top:133.2px;transform:scaleX(0.74)">ベリリー（仮称）</div>
  <div class="fl" style="left:158.7px;top:142px;transform:scaleX(0.8)">Ver0.6.4　仮統合</div>
  <div class="fl" style="left:158.7px;top:149.8px;transform:scaleX(0.86)">2.png</div>
  <div class="fl" style="left:224.2px;top:133.2px;transform:scaleX(0.863)">背景　枠あり.png</div>
  <div class="fl" style="left:289.2px;top:133.2px;transform:scaleX(0.863)">背景　枠なし.png</div>
</div>
<svg class="abs" style="left:425px;top:0;z-index:9" width="170" height="22" viewBox="0 0 170 22" font-family="'Liberation Sans',sans-serif" font-weight="bold">
  <g fill="none" stroke="#000" stroke-opacity=".28" stroke-width="4.500" stroke-linejoin="round" filter="url(#f-wm)">
    <text x="8" y="15.200" font-size="12.600" font-weight="normal" textLength="36.500" lengthAdjust="spacingAndGlyphs">www.</text>
    <text x="46.500" y="15.700" font-size="14.200" textLength="84" lengthAdjust="spacingAndGlyphs">BANDICAM</text>
    <text x="131.500" y="15.400" font-size="9.400" textLength="30.500" lengthAdjust="spacingAndGlyphs">.COM</text>
  </g>
  <g fill="#fff" stroke="#4a4a4a" stroke-width="1.600" stroke-linejoin="round" paint-order="stroke">
    <text x="8" y="15.200" font-size="12.600" font-weight="normal" textLength="36.500" lengthAdjust="spacingAndGlyphs">www.</text>
    <text x="46.500" y="15.700" font-size="14.200" textLength="84" lengthAdjust="spacingAndGlyphs">BANDICAM</text>
    <text x="131.500" y="15.400" font-size="9.400" textLength="30.500" lengthAdjust="spacingAndGlyphs">.COM</text>
  </g>
</svg>
</div>
</body>
</html>
